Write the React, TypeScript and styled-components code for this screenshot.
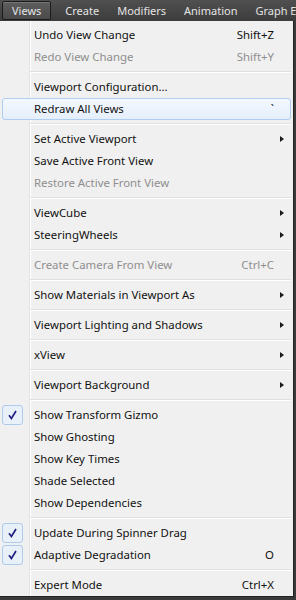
import styled, { createGlobalStyle } from "styled-components";

const GlobalStyle = createGlobalStyle`
  html, body {
    margin: 0;
    padding: 0;
    background: #3a3a3a;
    font-family: "Noto Sans", "Open Sans", sans-serif;
  }
`;

type Entry =
  | "sep"
  | {
      label: string;
      shortcut?: string;
      disabled?: boolean;
      sub?: boolean;
      checked?: boolean;
      hover?: boolean;
    };

const entries: Entry[] = [
  { label: "Undo View Change", shortcut: "Shift+Z" },
  { label: "Redo View Change", shortcut: "Shift+Y", disabled: true },
  "sep",
  { label: "Viewport Configuration..." },
  { label: "Redraw All Views", shortcut: "`", hover: true },
  "sep",
  { label: "Set Active Viewport", sub: true },
  { label: "Save Active Front View" },
  { label: "Restore Active Front View", disabled: true },
  "sep",
  { label: "ViewCube", sub: true },
  { label: "SteeringWheels", sub: true },
  "sep",
  { label: "Create Camera From View", shortcut: "Ctrl+C", disabled: true },
  "sep",
  { label: "Show Materials in Viewport As", sub: true },
  "sep",
  { label: "Viewport Lighting and Shadows", sub: true },
  "sep",
  { label: "xView", sub: true },
  "sep",
  { label: "Viewport Background", sub: true },
  "sep",
  { label: "Show Transform Gizmo", checked: true },
  { label: "Show Ghosting" },
  { label: "Show Key Times" },
  { label: "Shade Selected" },
  { label: "Show Dependencies" },
  "sep",
  { label: "Update During Spinner Drag", checked: true },
  { label: "Adaptive Degradation", shortcut: "O", checked: true },
  "sep",
  { label: "Expert Mode", shortcut: "Ctrl+X" },
];

const MenuBar = styled.div`
  display: flex;
  align-items: stretch;
  height: 21px;
  padding: 1px 0 0 2px;
  box-sizing: border-box;
  background: linear-gradient(#505050, #3c3c3c);
  overflow: hidden;
  white-space: nowrap;
`;

const BarItem = styled.div<{ $active?: boolean }>`
  display: flex;
  align-items: center;
  flex-shrink: 0;
  padding: ${(p) => (p.$active ? "0 9px 1px 9px" : "0 8px 1px")};
  margin-right: ${(p) => (p.$active ? "5px" : "0")};
  margin-bottom: 1px;
  font-size: 11px;
  color: #e4e4e4;
  border: 1px solid ${(p) => (p.$active ? "#1c1c1c" : "transparent")};
  border-radius: 2px;
  background: ${(p) => (p.$active ? "linear-gradient(#5e5e5e, #4a4a4a)" : "none")};
  box-shadow: ${(p) => (p.$active ? "inset 0 1px 0 #777" : "none")};
`;

const Menu = styled.div`
  width: 294px;
  padding: 3px 0 0;
  box-sizing: border-box;
  border-right: 1px solid #222;
  border-bottom: 1px solid #222;
  background: linear-gradient(
    to right,
    #f0f0f0 29px,
    #e2e3e3 29px,
    #e2e3e3 30px,
    #ffffff 30px,
    #ffffff 31px,
    #f0f0f0 31px
  );
`;

const Row = styled.div<{ $disabled?: boolean; $hover?: boolean }>`
  display: grid;
  grid-template-columns: 27px 1fr auto 16px;
  align-items: center;
  height: 22px;
  margin: 0 2px;
  padding-bottom: 2px;
  box-sizing: border-box;
  border: 1px solid ${(p) => (p.$hover ? "#aecdf0" : "transparent")};
  border-radius: 3px;
  background: ${(p) =>
    p.$hover ? "linear-gradient(#f3f8fe, #e5effb)" : "transparent"};
  font-size: 11.4px;
  color: ${(p) => (p.$disabled ? "#8e8e8e" : "#111")};
`;

const Gutter = styled.span`
  align-self: stretch;
  display: flex;
  align-items: center;
  margin-bottom: -2px;
`;

const Label = styled.span`
  padding-left: 4px;
  white-space: nowrap;
`;

const Shortcut = styled.span`
  white-space: nowrap;
`;

const Arrow = styled.span`
  justify-self: start;
  margin: 2px 0 0 6px;
  width: 0;
  height: 0;
  border-top: 3.5px solid transparent;
  border-bottom: 3.5px solid transparent;
  border-left: 4px solid #1a1a1a;
`;

const CheckBox = styled.span`
  display: flex;
  align-items: center;
  justify-content: center;
  width: 21px;
  height: 20px;
  margin-left: -1px;
  box-sizing: border-box;
  border: 1px solid #aecbeb;
  border-radius: 3px;
  background: #e8f0fa;
  color: #202080;
`;

const Separator = styled.div`
  height: 8px;
  margin: 0 2px 0 30px;
  display: flex;
  flex-direction: column;
  justify-content: center;

  &::before {
    content: "";
    height: 1px;
    background: #e0e0e0;
  }
  &::after {
    content: "";
    height: 1px;
    background: #ffffff;
  }
`;

function Check() {
  return (
    <svg width="9" height="10" viewBox="0 0 9 10">
      <path
        d="M1 5.2 L3.4 8.4 L8 1"
        fill="none"
        stroke="currentColor"
        strokeWidth="1.7"
      />
    </svg>
  );
}

export default function App() {
  return (
    <>
      <GlobalStyle />
      <MenuBar>
        <BarItem $active>Views</BarItem>
        <BarItem>Create</BarItem>
        <BarItem>Modifiers</BarItem>
        <BarItem>Animation</BarItem>
        <BarItem>Graph Ed</BarItem>
      </MenuBar>
      <Menu>
        {entries.map((e, i) =>
          e === "sep" ? (
            <Separator key={i} />
          ) : (
            <Row key={i} $disabled={e.disabled} $hover={e.hover}>
              <Gutter>
                {e.checked && (
                  <CheckBox>
                    <Check />
                  </CheckBox>
                )}
              </Gutter>
              <Label>{e.label}</Label>
              <Shortcut>{e.shortcut}</Shortcut>
              {e.sub ? <Arrow /> : <span />}
            </Row>
          )
        )}
      </Menu>
    </>
  );
}
